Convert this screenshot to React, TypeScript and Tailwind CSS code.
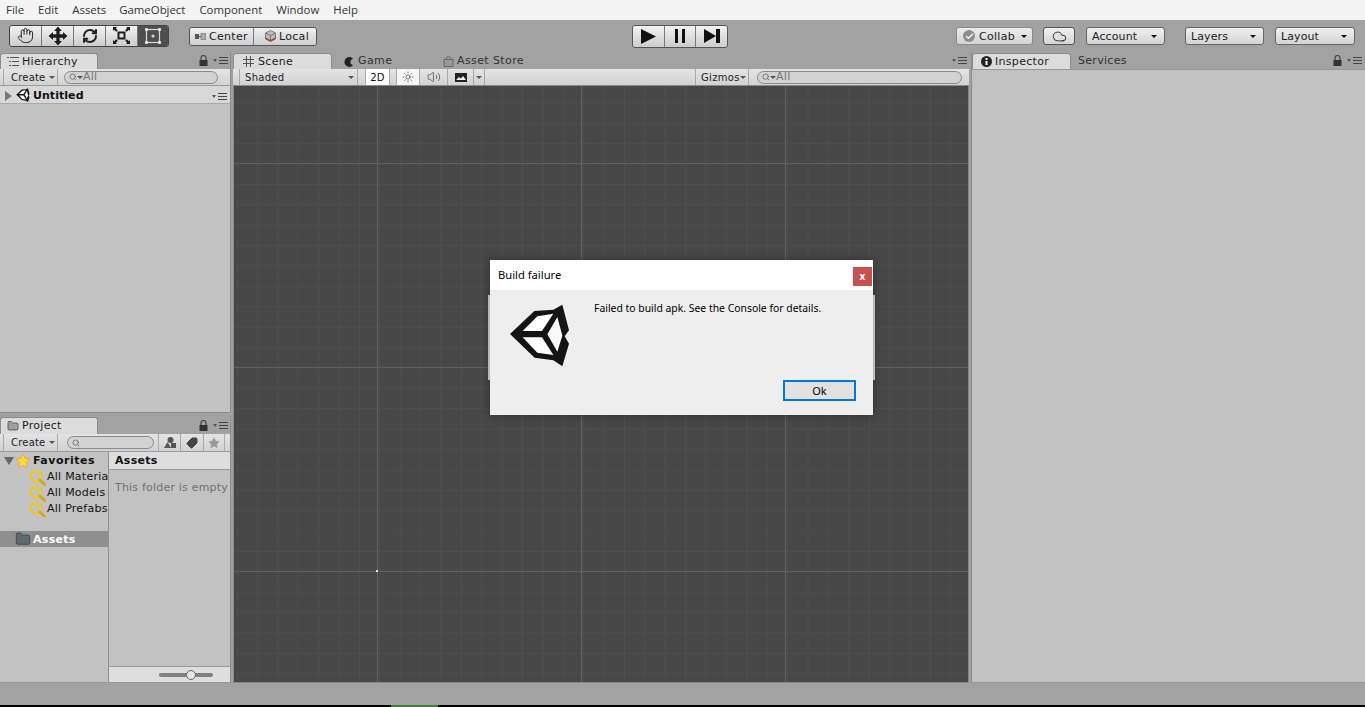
import React from "react";
import { Hand, RefreshCw, Cloud, Folder, Search, Tag, Star, Volume2, Sun, Check } from "lucide-react";

function UnityLogo({ size = 80, soft = false }: { size?: number; soft?: boolean }) {
  return (
    <svg width={size} height={size} viewBox="0 0 240 240" className={soft ? "blur-[0.5px]" : ""}>
      <polygon points="30,117 103,48 160,44 187,29 207,106 194,124 207,146 187,214 160,196 104,188" fill="#141414" />
      <polygon points="68,108 112,64 160,56 126,108" fill="#ffffff" />
      <polygon points="68,127 126,127 160,180 112,173" fill="#ffffff" />
      <polygon points="172,66 187,122 172,170 142,118" fill="#fafafa" />
    </svg>
  );
}

function MenuIcon() {
  return (
    <span className="flex items-center gap-[2px]">
      <span className="w-0 h-0 border-x-[2.5px] border-x-transparent border-t-[3px] border-t-[#555]" />
      <svg width="9" height="7" viewBox="0 0 9 7">
        <path d="M0 .5H9M0 3.5H9M0 6.5H9" stroke="#444" strokeWidth="1" />
      </svg>
    </span>
  );
}

function Caret({ color = "#333" }: { color?: string }) {
  return <span className="inline-block w-0 h-0 border-x-[3px] border-x-transparent border-t-[3px]" style={{ borderTopColor: color }} />;
}

function LockMenu() {
  return (
    <div className="flex items-center gap-[5px]">
      <svg width="9" height="11" viewBox="0 0 9 11">
        <path d="M2 5V3A2.5 2.5 0 0 1 7 3V5" fill="none" stroke="#444" strokeWidth="1.2" />
        <rect x="0.5" y="5" width="8" height="6" fill="#333" />
      </svg>
      <MenuIcon />
    </div>
  );
}

function Tab({ w, icon, label, textPad = "pt-[1px]" }: { w: string; icon: React.ReactNode; label: string; textPad?: string }) {
  return (
    <div className={`${w} h-[17px] mt-[1px] bg-[#dcdcdc] rounded-t-[3px] border border-b-0 border-[#8c8c8c] flex items-center text-[11px] text-[#1c1c1c] tracking-[0.3px] box-border`}>
      {icon}
      <span className={textPad}>{label}</span>
    </div>
  );
}

function SearchBox({ w, label, showCaret = true }: { w: string; label?: string; showCaret?: boolean }) {
  return (
    <div className={`${w} h-[13px] rounded-full border border-[#8a8a8a] bg-[#d2d2d2] flex items-center pl-[4px] text-[11px] text-[#777] leading-none`}>
      <Search size={8} strokeWidth={2} className="text-[#555]" />
      {showCaret && <Caret color="#555" />}
      {label && <span className="-mt-[2px]">{label}</span>}
    </div>
  );
}

function TopButton({ w, label, ml }: { w: string; label: string; ml: string }) {
  return (
    <div className={`${w} ${ml} pl-[5px] h-[18px] rounded-[3px] border border-[#666] bg-gradient-to-b from-[#f0f0f0] to-[#d4d4d4] flex items-center justify-between pr-[7px] text-[11px] text-[#1c1c1c] tracking-[0.1px]`}>
      <span className="pt-[2px]">{label}</span>
      <Caret color="#111" />
    </div>
  );
}

function Seg({ w, dark, last, children }: { w: string; dark?: boolean; last?: boolean; children: React.ReactNode }) {
  return (
    <div className={`${w} h-full flex items-center justify-center ${last ? "" : "border-r border-[#777]"} ${dark ? "bg-[#4f4f4f]" : "bg-gradient-to-b from-[#f2f2f2] to-[#cdcdcd]"}`}>
      {children}
    </div>
  );
}

function FavRow({ label }: { label: string }) {
  return (
    <div className="h-[16px] flex items-center pl-[29px] whitespace-nowrap">
      <svg width="17" height="17" viewBox="0 0 17 17" className="shrink-0 mr-[1px]">
        <circle cx="7" cy="7" r="5.2" fill="none" stroke="#f0c814" strokeWidth="2.2" />
        <path d="M11 11L15.5 15.5" stroke="#d9a60c" strokeWidth="2.8" strokeLinecap="round" />
      </svg>
      <span className="text-[11px] text-[#111] tracking-[0.25px]">{label}</span>
    </div>
  );
}

export default function App() {
  return (
    <div className="relative w-[1365px] h-[707px] overflow-hidden flex flex-col bg-[#a2a2a2] font-['DejaVu_Sans',sans-serif]">
      {/* Menu bar */}
      <div className="h-[20px] shrink-0 bg-[#f4f4f4] flex items-center pl-[6px] gap-[14px] text-[11.4px] text-[#333] font-['Open_Sans',sans-serif]">
        <span>File</span>
        <span>Edit</span>
        <span>Assets</span>
        <span className="-ml-[1px]">GameObject</span>
        <span>Component</span>
        <span>Window</span>
        <span>Help</span>
      </div>

      {/* Toolbar */}
      <div className="h-[32px] shrink-0 flex items-center">
        <div className="ml-[9px] h-[22px] w-[160px] mb-[1px] flex rounded-[3px] border border-[#444] overflow-hidden">
          <Seg w="w-[32px]"><Hand size={17} strokeWidth={1.4} className="text-[#222]" /></Seg>
          <Seg w="w-[32px]">
            <svg width="20" height="20" viewBox="0 0 18 18"><path d="M9 0.5L12.5 4.5H10.5V7.5H13.5V5.5L17.5 9L13.5 12.5V10.5H10.5V13.5H12.5L9 17.5L5.5 13.5H7.5V10.5H4.5V12.5L0.5 9L4.5 5.5V7.5H7.5V4.5H5.5Z" fill="#1c1c1c" /></svg>
          </Seg>
          <Seg w="w-[32px]"><RefreshCw size={16} strokeWidth={3} className="text-[#222]" /></Seg>
          <Seg w="w-[32px]">
            <svg width="19" height="19" viewBox="0 0 19 19"><rect x="6.5" y="6.5" width="6" height="6" fill="none" stroke="#1c1c1c" strokeWidth="2" /><path d="M1 5V1H5L3.8 2.2L5.8 4.2L4.2 5.8L2.2 3.8ZM18 5V1H14L15.2 2.2L13.2 4.2L14.8 5.8L16.8 3.8ZM1 14V18H5L3.8 16.8L5.8 14.8L4.2 13.2L2.2 15.2ZM18 14V18H14L15.2 16.8L13.2 14.8L14.8 13.2L16.8 15.2Z" fill="#1c1c1c" /></svg>
          </Seg>
          <Seg w="w-[30px]" dark last>
            <svg width="18" height="18" viewBox="0 0 18 18"><rect x="2.5" y="2.5" width="13" height="13" fill="none" stroke="#d8d8d8" strokeWidth="1.2" /><circle cx="9" cy="9" r="1.6" fill="#d8d8d8" /><rect x="1" y="1" width="3" height="3" rx="1" fill="#e6e6e6" /><rect x="14" y="1" width="3" height="3" rx="1" fill="#e6e6e6" /><rect x="1" y="14" width="3" height="3" rx="1" fill="#e6e6e6" /><rect x="14" y="14" width="3" height="3" rx="1" fill="#e6e6e6" /></svg>
          </Seg>
        </div>
        <div className="ml-[20px] h-[19px] w-[128px] flex rounded-[3px] border border-[#555] overflow-hidden text-[11px] text-[#1c1c1c] tracking-[0.3px]">
          <div className="w-[64px] border-r border-[#777] bg-gradient-to-b from-[#f0f0f0] to-[#cfcfcf] flex items-center pl-[5px] gap-[3px]">
            <svg width="11" height="7" viewBox="0 0 11 7"><rect x="0" y="1" width="4" height="5" fill="#555" /><path d="M4 3.5H6" stroke="#555" /><rect x="6" y="0" width="5" height="7" fill="#aaa" stroke="#666" strokeWidth=".6" /></svg>
            <span className="pt-[2px]">Center</span>
          </div>
          <div className="flex-1 bg-gradient-to-b from-[#f0f0f0] to-[#cfcfcf] flex items-center pl-[11px] gap-[3px]">
            <svg width="11" height="12" viewBox="0 0 11 12"><path d="M5.5 0.5L10.5 3V9L5.5 11.5L0.5 9V3Z" fill="#bbb" stroke="#666" strokeWidth=".8" /><path d="M0.5 7.5L5.5 10L10.5 7.5V9L5.5 11.5L0.5 9Z" fill="#b33" /><path d="M0.5 3L5.5 5.5L10.5 3M5.5 5.5V10" fill="none" stroke="#666" strokeWidth=".8" /></svg>
            <span className="pt-[2px]">Local</span>
          </div>
        </div>
        <div className="ml-[315px] h-[23px] w-[96px] flex rounded-[3px] border border-[#555] overflow-hidden">
          <Seg w="w-[32px]"><svg width="16" height="15" viewBox="0 0 16 15"><path d="M1 0L16 7.5L1 15Z" fill="#111" /></svg></Seg>
          <Seg w="w-[32px]"><svg width="10" height="14" viewBox="0 0 10 14"><path d="M0 0H3V14H0ZM7 0H10V14H7Z" fill="#111" /></svg></Seg>
          <Seg w="w-[31px]" last><svg width="16" height="14" viewBox="0 0 16 14"><path d="M0 0L12 7L0 14ZM12 0H16V14H12Z" fill="#111" /></svg></Seg>
        </div>
        <div className="ml-[228px] w-[77px] h-[18px] rounded-[3px] border border-[#8a8a8a] bg-gradient-to-b from-[#ececec] to-[#d4d4d4] flex items-center pl-[6px] gap-[4px] text-[11px] text-[#1c1c1c] tracking-[0.3px]">
          <span className="w-[12px] h-[12px] rounded-full bg-[#8d8d8d] flex items-center justify-center"><Check size={9} strokeWidth={3.5} className="text-white" /></span>
          <span className="pt-[2px]">Collab</span>
          <span className="ml-[2px] flex"><Caret color="#111" /></span>
        </div>
        <div className="ml-[10px] w-[32px] h-[18px] rounded-[3px] border border-[#555] bg-gradient-to-b from-[#f0f0f0] to-[#d4d4d4] flex items-center justify-center">
          <Cloud size={15} strokeWidth={1.3} className="text-[#111]" />
        </div>
        <TopButton w="w-[79px]" ml="ml-[11px]" label="Account" />
        <TopButton w="w-[79px]" ml="ml-[20px]" label="Layers" />
        <TopButton w="w-[80px]" ml="ml-[11px]" label="Layout" />
      </div>

      {/* Panels */}
      <div className="h-[631px] shrink-0 flex">
        {/* Left column */}
        <div className="w-[231px] shrink-0 flex flex-col">
          <div className="h-[361px] flex flex-col border-b border-r border-[#8a8a8a]">
            <div className="h-[17px] shrink-0 flex justify-between items-center border-b border-[#8c8c8c] pr-[2px] box-content -mb-[1px]">
              <Tab w="w-[98px] pl-[6px] gap-[3px]" icon={<svg width="12" height="9" viewBox="0 0 12 9"><path d="M0 .5H2M3 .5H12M2 4.5H4M5 4.5H12M2 8.5H4M5 8.5H12" stroke="#555" /></svg>} label="Hierarchy" />
              <LockMenu />
            </div>
            <div className="h-[16px] shrink-0 bg-gradient-to-b from-[#e4e4e4] to-[#d2d2d2] border-b border-[#9a9a9a] flex items-center text-[10px] text-[#222] tracking-[0.2px] box-content">
              <div className="w-[55px] h-full border-x border-[#a8a8a8] ml-[3px] flex items-center pl-[7px] gap-[4px]"><span>Create</span><Caret color="#555" /></div>
              <div className="ml-[6px]"><SearchBox w="w-[154px]" label="All" /></div>
            </div>
            <div className="h-[18px] shrink-0 bg-[#d8d8d8] border-b border-[#aaa] flex items-center pl-[5px] pr-[3px] pt-[3px]">
              <span className="w-0 h-0 border-y-[5px] border-y-transparent border-l-[7px] border-l-[#7a7a7a]" />
              <span className="ml-[2px] -mt-[2px]"><UnityLogo size={18} /></span>
              <span className="ml-[1px] text-[11px] font-bold text-[#111] tracking-[0.05px]">Untitled</span>
              <span className="ml-auto"><MenuIcon /></span>
            </div>
            <div className="flex-1 bg-[#c2c2c2]" />
          </div>
          <div className="h-[3px] shrink-0" />
          <div className="flex-1 flex flex-col border-r border-[#8a8a8a] min-h-0">
            <div className="h-[18px] shrink-0 flex justify-between items-center border-b border-[#8c8c8c] pr-[2px] -mb-[1px] box-content">
              <Tab w="w-[98px] pl-[6px] gap-[3px]" icon={<Folder size={12} strokeWidth={1.5} className="text-[#444]" fill="#a0a0a0" />} label="Project" />
              <LockMenu />
            </div>
            <div className="h-[17px] shrink-0 bg-gradient-to-b from-[#e4e4e4] to-[#d2d2d2] border-b border-[#9a9a9a] flex items-center text-[10px] text-[#222] tracking-[0.2px] box-content">
              <div className="w-[55px] h-full border-x border-[#a8a8a8] ml-[3px] flex items-center pl-[7px] gap-[4px]"><span>Create</span><Caret color="#555" /></div>
              <div className="ml-[9px]"><SearchBox w="w-[87px]" showCaret={false} /></div>
              <div className="ml-[4px] w-[22px] h-full border-l border-[#a8a8a8] flex items-center justify-center">
                <svg width="12" height="11" viewBox="0 0 12 11"><circle cx="6.5" cy="3" r="3" fill="#555" /><rect x="7" y="6" width="5" height="5" fill="#555" /><path d="M0 11L3.5 5L7 11Z" fill="#555" /></svg>
              </div>
              <div className="w-[23px] h-full border-l border-[#a8a8a8] flex items-center justify-center">
                <Tag size={12} strokeWidth={2} className="text-[#444] rotate-90" fill="#444" />
              </div>
              <div className="w-[22px] h-full border-x border-[#a8a8a8] flex items-center justify-center">
                <Star size={12} strokeWidth={1} className="text-[#999]" fill="#999" />
              </div>
            </div>
            <div className="flex-1 flex min-h-0">
              <div className="w-[109px] shrink-0 bg-[#c2c2c2] border-r border-[#8f8f8f] flex flex-col pt-[1px] border-b border-b-[#999]">
                <div className="h-[16px] flex items-center pl-[4px]">
                  <span className="w-0 h-0 border-x-[5px] border-x-transparent border-t-[8px] border-t-[#666]" />
                  <Star size={16} strokeWidth={1} className="ml-[1px] text-[#d9a60c]" fill="#ffd93b" />
                  <span className="ml-[2px] text-[11px] font-bold text-[#111] tracking-[0.5px]">Favorites</span>
                </div>
                <div className="overflow-hidden">
                  <FavRow label="All Materials" />
                  <FavRow label="All Models" />
                  <FavRow label="All Prefabs" />
                </div>
                <div className="h-[16px] mt-[14px] bg-[#8f8f8f] flex items-center pl-[15px] gap-[2px] pt-[3px]">
                  <Folder size={16} strokeWidth={1} className="text-[#2f3a40] -mt-[3px]" fill="#5d6a70" />
                  <span className="text-[11px] font-bold text-white tracking-[0.3px]">Assets</span>
                </div>
              </div>
              <div className="flex-1 flex flex-col bg-[#c2c2c2] overflow-hidden">
                <div className="h-[18px] shrink-0 bg-[#dedede] border-b border-[#999] flex items-center pl-[6px] pt-[2px] text-[11px] font-bold text-[#111] tracking-[0.3px]">Assets</div>
                <div className="pl-[6px] pt-[10px] text-[11px] text-[#707070] tracking-[0.2px] whitespace-nowrap flex-1">This folder is empty</div>
                <div className="h-[17px] shrink-0 bg-[#dedede] border-y border-[#999] flex items-center pl-[50px]">
                  <div className="relative w-[54px] h-[4px] rounded-full bg-[#808080]">
                    <div className="absolute left-[27px] -top-[3px] w-[10px] h-[10px] rounded-full bg-[#e6e6e6] border border-[#666]" />
                  </div>
                </div>
              </div>
            </div>
          </div>
        </div>

        {/* Scene */}
        <div className="w-[736px] ml-[2px] shrink-0 flex flex-col">
          <div className="h-[17px] shrink-0 flex items-center border-b border-[#8c8c8c] box-content -mb-[1px] text-[11px] text-[#333] tracking-[0.4px]">
            <Tab w="w-[99px] pl-[9px] gap-[4px]" icon={<svg width="11" height="11" viewBox="0 0 11 11"><path d="M3.5 0V11M7.5 0V11M0 3.5H11M0 7.5H11" stroke="#555" /></svg>} label="Scene" />
            <div className="ml-[12px] flex items-center gap-[4px] w-[99px] pt-[2px]">
              <svg width="10" height="10" viewBox="0 0 10 10"><path d="M9 1.5A5 5 0 1 0 9 8.5L6.5 6.5V3.5Z" fill="#222" /></svg>
              <span>Game</span>
            </div>
            <div className="flex items-center gap-[3px] pt-[2px]">
              <svg width="11" height="11" viewBox="0 0 11 11"><rect x="1" y="3.5" width="9" height="7" fill="#999" stroke="#666" /><path d="M3 3L4 1H7L8 3" fill="none" stroke="#666" /></svg>
              <span>Asset Store</span>
            </div>
            <span className="ml-auto mr-[2px]"><MenuIcon /></span>
          </div>
          <div className="h-[16px] shrink-0 bg-gradient-to-b from-[#e4e4e4] to-[#d2d2d2] border-b border-[#8a8a8a] flex items-center text-[10px] text-[#222] tracking-[0.3px] box-content">
            <div className="ml-[6px] w-[119px] h-full border-l border-r border-[#a8a8a8] flex items-center justify-between pl-[5px] pr-[3px]"><span>Shaded</span><Caret color="#555" /></div>
            <div className="ml-[7px] w-[25px] h-full bg-white border-x border-[#a8a8a8] flex items-center justify-center text-[#111]">2D</div>
            <div className="ml-[6px] w-[24px] h-full bg-[#f6f6f6] border-x border-[#a8a8a8] flex items-center justify-center"><Sun size={12} strokeWidth={1.3} className="text-[#333]" /></div>
            <div className="w-[28px] h-full border-r border-[#a8a8a8] flex items-center justify-center"><Volume2 size={14} strokeWidth={1.6} className="text-[#666]" /></div>
            <div className="w-[26px] h-full flex items-center justify-center border-r border-[#a8a8a8]">
              <svg width="12" height="9" viewBox="0 0 12 9"><rect width="12" height="9" fill="#222" /><path d="M1 7L4 4L6 5.5L8 3L11 7Z" fill="#eee" /></svg>
            </div>
            <div className="w-[11px] h-full border-r border-[#a8a8a8] flex items-center justify-center"><Caret color="#555" /></div>
            <div className="ml-[210px] w-[54px] h-full border-x border-[#a8a8a8] flex items-center justify-between pl-[5px] pr-[3px]"><span>Gizmos</span><Caret color="#555" /></div>
            <div className="ml-[8px]"><SearchBox w="w-[205px]" label="All" /></div>
          </div>
          <div className="relative flex-1 border border-[#888] border-t-0 bg-[#474747] [background-image:linear-gradient(to_right,#646464_1px,transparent_1px),linear-gradient(to_bottom,#5f5f5f_1px,transparent_1px),linear-gradient(to_right,#4d4d4d_1px,transparent_1px),linear-gradient(to_bottom,#4d4d4d_1px,transparent_1px)] [background-size:204px_100%,100%_204px,20.4px_100%,100%_20.4px] [background-position:143px_0,0_77px,2.6px_0,0_16.4px]">
            <div className="absolute left-[142px] top-[484px] w-[2px] h-[2px] bg-[#e8e8e8]" />
          </div>
        </div>

        {/* Inspector */}
        <div className="ml-[2px] flex-1 flex flex-col border-l border-[#8a8a8a]">
          <div className="h-[17px] shrink-0 flex items-center border-b border-[#8c8c8c] box-content -mb-[1px] pr-[3px]">
            <Tab
              w="w-[99px] pl-[8px] gap-[3px]"
              icon={<svg width="11" height="11" viewBox="0 0 11 11"><circle cx="5.5" cy="5.5" r="5.5" fill="#222" /><rect x="4.5" y="2" width="2" height="2" fill="#fff" /><rect x="4.5" y="5" width="2" height="4" fill="#fff" /></svg>}
              label="Inspector"
            />
            <span className="ml-[7px] pt-[2px] text-[11px] text-[#333] tracking-[0.3px]">Services</span>
            <span className="ml-auto"><LockMenu /></span>
          </div>
          <div className="flex-1 bg-[#c2c2c2] border-t border-[#999] border-b border-b-[#999]" />
        </div>
      </div>

      {/* Status bar */}
      <div className="h-[22px] shrink-0 bg-[#a2a2a2]" />
      <div className="h-[2px] shrink-0 bg-black flex">
        <div className="ml-[391px] w-[47px] h-full bg-[#4a7a43]" />
      </div>

      {/* Dialog */}
      <div className="absolute left-[488px] top-[295px] w-[387px] h-[85px] bg-[#d8d8d8]" />
      <div className="absolute left-[490px] top-[260px] w-[383px] h-[155px] flex flex-col shadow-[0_0_8px_rgba(0,0,0,0.35)] font-['Noto_Sans',sans-serif] text-black">
        <div className="h-[30px] shrink-0 bg-white flex items-center justify-between pl-[8px] pr-[1px] text-[11.2px]">
          <span>Build failure</span>
          <div className="w-[19px] h-[19px] mt-[2px] bg-[#c75050] flex items-center justify-center text-white text-[10px] font-bold leading-none">x</div>
        </div>
        <div className="flex-1 bg-[#eeeeee] flex relative">
          <div className="absolute left-[10px] top-[5px]"><UnityLogo soft /></div>
          <div className="ml-[104px] mt-[10px] text-[10.4px] leading-[16px]">Failed to build apk. See the Console for details.</div>
          <div className="absolute left-[293px] top-[90px] w-[73px] h-[21px] border-2 border-[#0078d7] bg-[#e1e1e1] flex items-center justify-center pt-[1px] text-[11px]">Ok</div>
        </div>
      </div>
    </div>
  );
}
